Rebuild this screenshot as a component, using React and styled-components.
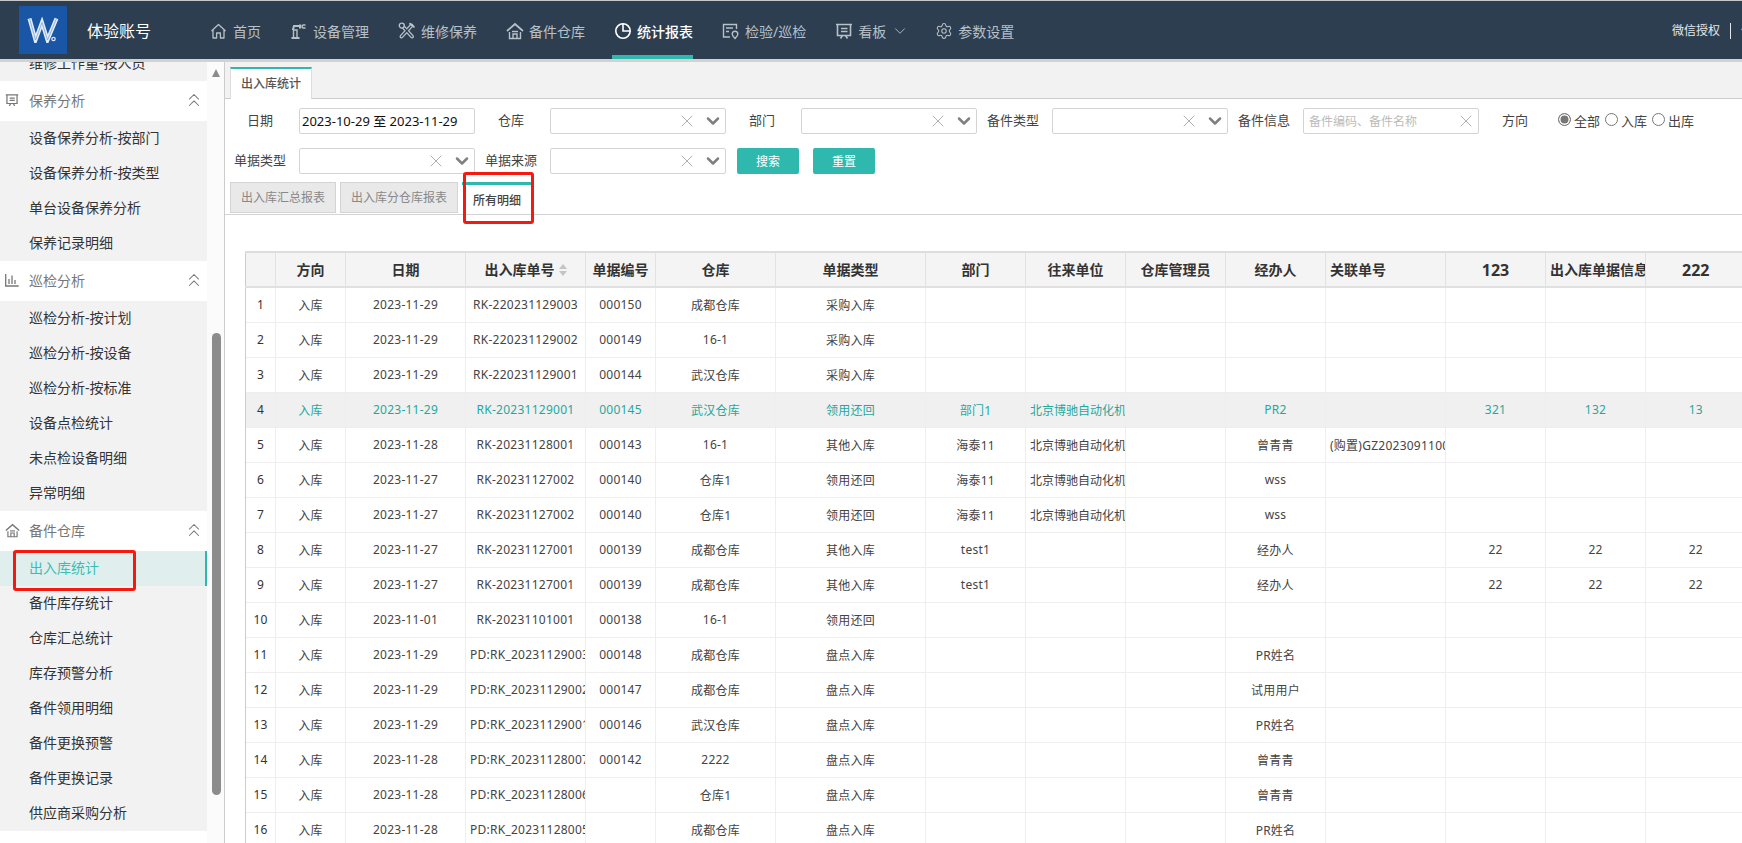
import React from 'react';
import styled, { createGlobalStyle } from 'styled-components';
import { ChevronDown, ChevronsUp, X, Settings } from 'lucide-react';

const GlobalStyle = createGlobalStyle`
  html, body {
    margin: 0;
    padding: 0;
    height: 100%;
    overflow: hidden;
    background: #fff;
  }
  body {
    font-family: "Noto Sans", "Noto Sans CJK SC", sans-serif;
    font-size: 12px;
    color: #333;
  }
  * { box-sizing: border-box; }
`;

const Page = styled.div`
  width: 1742px;
  height: 843px;
  display: flex;
  flex-direction: column;
  overflow: hidden;
`;

/* top bar */
const Header = styled.header`
  flex: none;
  height: 62px;
  padding: 5px 0 0 19px;
  display: flex;
  background: #2d3e50;
  border-top: 1px solid #c8c8c8;
  border-bottom: 3px solid #d2d2d2;
  overflow: hidden;
`;

const Logo = styled.div`
  flex: none;
  width: 48px;
  height: 48px;
  background: #1a56a6;
  display: flex;
  align-items: center;
  justify-content: center;
`;

const Brand = styled.div`
  flex: none;
  width: 143px;
  padding: 13px 0 0 20px;
  font-size: 16px;
  line-height: 24px;
  color: #fff;
`;

const Nav = styled.nav`
  flex: 1;
  display: flex;
  gap: 29px;
  margin-top: -5px;
`;

const NavItem = styled.a`
  height: 58px;
  display: flex;
  align-items: center;
  gap: 5px;
  font-size: 14px;
  padding-top: 6px;
  white-space: nowrap;
  color: ${(p) => (p.$active ? '#fff' : '#b8c0c8')};
  font-weight: ${(p) => (p.$active ? 500 : 400)};
  border-bottom: 4px solid ${(p) => (p.$active ? '#2fb9ae' : 'transparent')};
  margin-left: ${(p) => (p.$active ? '-2px' : '0')};
  padding-left: ${(p) => (p.$active ? '2px' : '0')};
`;

const NavMore = styled(ChevronDown)`
  margin-right: -3px;
`;

const HeaderRight = styled.div`
  flex: none;
  width: 70px;
  display: flex;
  margin-top: 17px;
  height: 16px;
  font-size: 12px;
  line-height: 16px;
  color: #e4e7ea;
  white-space: nowrap;
  overflow: hidden;
`;

const HeaderLink = styled.span`
  flex: none;
  width: 59px;
  margin-right: 10px;
  border-right: 1px solid #e4e7ea;
`;

const Body = styled.div`
  flex: 1;
  min-height: 0;
  display: flex;
`;

/* left menu */
const Side = styled.aside`
  flex: none;
  width: 225px;
  display: flex;
  background: #fbfbfb;
  border-right: 1px solid #ccc;
`;

const SideList = styled.div`
  flex: none;
  width: 207px;
  height: 100%;
  background: #fff;
  overflow: hidden;
`;

const ClippedItem = styled.div`
  height: 19px;
  padding-left: 29px;
  background: #f2f2f2;
  font-size: 14px;
  line-height: 2px;
  color: #333;
  overflow: hidden;
  white-space: nowrap;
`;

const GroupHead = styled.div`
  height: 40px;
  padding: 0 2px 2px 5px;
  display: flex;
  align-items: center;
  background: #fff;
  font-size: 14px;
  color: #777;
`;

const GroupIcon = styled.span`
  flex: none;
  width: 24px;
  display: flex;
`;

const GroupTitle = styled.span`
  flex: 1;
`;

const SubItem = styled.div`
  position: relative;
  height: 35px;
  padding-left: 29px;
  font-size: 14px;
  line-height: 34px;
  white-space: nowrap;
  color: ${(p) => (p.$active ? '#3dbdb2' : '#333')};
  background: ${(p) => (p.$active ? '#e0efee' : '#f2f2f2')};
  border-right: ${(p) => (p.$active ? '2px solid #2fb9ae' : 'none')};
`;

const ScrollGutter = styled.div`
  position: relative;
  flex: 1;
`;

const ScrollArrow = styled.div`
  position: absolute;
  left: 5px;
  top: 7px;
  width: 0;
  height: 0;
  border-left: 4.5px solid transparent;
  border-right: 4.5px solid transparent;
  border-bottom: 8px solid #8c8c8c;
`;

const ScrollThumb = styled.div`
  position: absolute;
  left: 5px;
  top: 271px;
  width: 9px;
  height: 462px;
  border-radius: 5px;
  background: #8c8c8c;
`;

const Mark = styled.div`
  position: absolute;
  z-index: 2;
  border: 3px solid #f5190f;
  border-radius: 3px;
  pointer-events: none;
`;

const MenuMark = styled(Mark)`
  left: 13px;
  top: -1px;
  width: 123px;
  height: 41px;
`;

/* right side */
const Main = styled.main`
  flex: 1;
  min-width: 0;
  display: flex;
  flex-direction: column;
  overflow: hidden;
`;

const PageTabs = styled.div`
  flex: none;
  height: 37px;
  padding: 5px 0 0 5px;
  background: #f2f2f2;
  border-bottom: 1px solid #ccc;
`;

const PageTab = styled.div`
  width: 82px;
  height: 32px;
  background: #fff;
  border-top: 2px solid #2fb9ae;
  border-left: 1px solid #ddd;
  border-right: 1px solid #ddd;
  text-align: center;
  font-size: 12px;
  line-height: 29px;
  font-weight: 500;
  color: #555;
`;

const FilterGrid = styled.div`
  flex: none;
  display: grid;
  grid-template-columns: repeat(5, 75px 176px) 75px auto;
  grid-auto-rows: 26px;
  row-gap: 14px;
  padding: 9px 0 0 0;
  margin-left: -1px;
`;

const FieldLabel = styled.label`
  font-size: 13px;
  line-height: 24px;
  padding-right: 3px;
  text-align: center;
  color: #444;
`;

const DateBox = styled.div`
  border: 1px solid #d4d4d4;
  border-radius: 2px;
  padding-left: 2px;
  font-size: 13px;
  line-height: 24px;
  color: #111;
  white-space: nowrap;
`;

const SelectBox = styled.div`
  border: 1px solid #d4d4d4;
  border-radius: 2px;
  display: flex;
  align-items: center;
  justify-content: flex-end;
  padding-right: 2px;
  gap: 6px;
  color: #a8a8a8;
`;

const TextBox = styled(SelectBox)`
  justify-content: space-between;
  padding: 0 2px 0 5px;
  font-size: 12px;
  color: #bbb;
`;

const RadioGroup = styled.div`
  display: flex;
  align-items: center;
  padding: 0 0 2px 4px;
  font-size: 13px;
  color: #444;
  grid-column: 12;
`;

const RadioDot = styled.span`
  width: 13px;
  height: 13px;
  margin: -1px 3px 0 ${(p) => (p.$first ? 0 : 5)}px;
  border: 1px solid #777;
  border-radius: 50%;
  background: ${(p) => (p.$on ? '#777' : '#fff')};
  box-shadow: ${(p) => (p.$on ? 'inset 0 0 0 1.5px #fff' : 'none')};
`;

const ButtonRow = styled.div`
  grid-column: 5 / span 3;
  display: flex;
  gap: 14px;
  padding-left: 11px;
`;

const TealButton = styled.button`
  width: 62px;
  height: 26px;
  padding: 0;
  border: none;
  border-radius: 2px;
  background: #2fb9ae;
  color: #fff;
  font: inherit;
  font-size: 12px;
`;

const ReportTabs = styled.div`
  position: relative;
  flex: none;
  height: 33px;
  margin-top: 8px;
  padding-left: 5px;
  display: flex;
  gap: 4px;
  border-bottom: 1px solid #d4d4d4;
`;

const ReportTab = styled.div`
  height: ${(p) => (p.$active ? '32px' : '31px')};
  padding: 0 10px;
  font-size: 12px;
  white-space: nowrap;
  ${(p) =>
    p.$active
      ? `
    margin-bottom: -1px;
    width: 70px;
    padding: 0 11px;
    line-height: 31px;
    font-weight: 500;
    color: #444;
    background: #fff;
    border-top: 3px solid #2fb9ae;
  `
      : `
    line-height: 29px;
    color: #888;
    background: #e9e9e9;
    border: 1px solid #d4d4d4;
  `}
`;

const TabMark = styled(Mark)`
  left: 238px;
  top: -10px;
  width: 71px;
  height: 52px;
`;

const TableWrap = styled.div`
  flex: 1;
  min-height: 0;
  margin: 36px 0 0 20px;
  overflow: hidden;
`;

const Table = styled.table`
  width: 1500px;
  table-layout: fixed;
  border-collapse: collapse;
  font-size: 12px;
  letter-spacing: 0.25px;
`;

const HeadRow = styled.tr`
  height: 35px;
  background: #f4f4f4;
  border-top: 2px solid #ddd;
  border-bottom: 2px solid #e0e0e0;
`;

const Th = styled.th`
  padding: 0 4px;
  font-size: ${(p) => (p.$digits ? '16px' : '14px')};
  font-weight: 700;
  letter-spacing: 0;
  line-height: 1;
  white-space: nowrap;
  overflow: hidden;
  text-align: ${(p) => (p.$left ? 'left' : 'center')};
  color: #333;
  border-left: 1px solid ${(p) => (p.$first ? '#ccc' : '#e2e2e2')};
`;

const SortIcon = styled.svg`
  width: 8px;
  height: 12px;
  margin-left: 4px;
  vertical-align: -1px;
`;

const Row = styled.tr`
  height: 35px;
  background: ${(p) => (p.$active ? '#f0f0f0' : '#fff')};
  color: ${(p) => (p.$active ? '#1fa99e' : '#444')};
  border-bottom: 1px solid #eee;
`;

const Td = styled.td`
  padding: 0 0 0 ${(p) => (p.$left ? '4px' : '0')};
  text-align: ${(p) => (p.$left ? 'left' : 'center')};
  white-space: nowrap;
  overflow: hidden;
  border-left: 1px solid ${(p) => (p.$first ? '#ccc' : '#eee')};
`;

const IndexCell = styled(Td)`
  color: #333;
`;

const CompanyCell = styled(Td)`
  letter-spacing: 0;
`;

/* icons */
const HomeIcon = () => (
  <svg width="18" height="18" viewBox="0 0 18 18" fill="none" stroke="currentColor" strokeWidth="1.3" strokeLinejoin="round">
    <path d="M1.5 9 8.500 2.500 15.500 9M3 8v8h3.600v-5h3.800v5H14V8" />
  </svg>
);

const RobotIcon = () => (
  <svg width="18" height="18" viewBox="0 0 18 18" fill="none" stroke="currentColor">
    <path d="M1.500 16h8" strokeWidth="2" />
    <path d="M3.500 15V8h3.500v7" strokeWidth="1.400" />
    <path d="M2.800 8 4 4h6" strokeWidth="2" />
    <path d="M10 2.500v4" strokeWidth="2" />
    <path d="M15.500 3h-2a1.300 1.300 0 0 0 0 3h2" strokeWidth="1.600" />
  </svg>
);

const ToolsIcon = () => (
  <svg width="18" height="18" viewBox="0 0 18 18" fill="none" strokeLinecap="round">
    <path d="M4 3.500 14 14.500M13.500 3.500 3.500 14.500" stroke="currentColor" strokeWidth="4" />
    <path d="M4 3.500 14 14.500M13.500 3.500 3.500 14.500" stroke="#2d3e50" strokeWidth="1.300" />
    <circle cx="3.800" cy="3.600" r="2.500" fill="#2d3e50" stroke="currentColor" strokeWidth="1.400" />
    <path d="M12 1.800l3.800 3" stroke="currentColor" strokeWidth="2" />
  </svg>
);

const StoreIcon = ({ size = 18 }) => (
  <svg width={size} height={size} viewBox="0 0 18 18" fill="none" stroke="currentColor">
    <path d="M1 9 9 2l8 7" strokeWidth="1.800" />
    <path d="M6 9.500h6" strokeWidth="1.400" />
    <path d="M3.500 10v6.500h11V10M7 16.500v-4.500h4v4.500" strokeWidth="1.400" />
  </svg>
);

const PieIcon = () => (
  <svg width="18" height="18" viewBox="0 0 18 18" fill="none" stroke="currentColor" strokeWidth="1.600">
    <circle cx="9" cy="9" r="7.200" />
    <path d="M9 1.800V9h7.200" />
  </svg>
);

const CheckIcon = () => (
  <svg width="18" height="18" viewBox="0 0 18 18" fill="none" stroke="currentColor" strokeWidth="1.400">
    <path d="M8 15H1.500V2.500h13V7M4 6h7M4 9.500h3" />
    <path d="M13 16.500s-2.800-2.500-2.800-4.500a2.800 2.800 0 0 1 5.600 0c0 2-2.800 4.500-2.800 4.500z" />
  </svg>
);

const BoardIcon = ({ size = 18 }) => (
  <svg width={size} height={size} viewBox="0 0 18 18" fill="none" stroke="currentColor" strokeWidth="1.600">
    <path d="M1 2.500h16M2.500 2.500v11h13v-11M5.500 16.500l2-3M12.500 16.500l-2-3M6 6.500h6.500M6 9.500h6.500" />
  </svg>
);

const BarsIcon = () => (
  <svg width="14" height="14" viewBox="0 0 14 14" fill="none" stroke="currentColor" strokeWidth="1.300">
    <path d="M.7 1v12h13M4 11V6M7 11V2.500M10 11V7" />
  </svg>
);

const LogoMark = () => (
  <svg width="32" height="26" viewBox="0 0 32 26" fill="none" strokeLinejoin="miter">
    <path d="M2.500 1.500 8.500 23 15 5.500 20.500 23 29.500 1.500" stroke="#e3ecf8" strokeWidth="4" />
    <path d="M2.500 1.500 8.500 23 15 5.500 20.500 23 29.500 1.500" stroke="#7ea3d6" strokeWidth="0.800" />
    <circle cx="26.500" cy="22" r="1.700" fill="#1a56a6" stroke="#e3ecf8" strokeWidth="1.200" />
  </svg>
);

const navItems = [
  { label: '首页', icon: <HomeIcon /> },
  { label: '设备管理', icon: <RobotIcon /> },
  { label: '维修保养', icon: <ToolsIcon /> },
  { label: '备件仓库', icon: <StoreIcon /> },
  { label: '统计报表', icon: <PieIcon />, active: true },
  { label: '检验/巡检', icon: <CheckIcon /> },
  { label: '看板', icon: <BoardIcon />, more: true },
  { label: '参数设置', icon: <Settings size={18} strokeWidth={1.4} /> },
];

const menu = [
  {
    title: '保养分析',
    icon: <BoardIcon size={14} />,
    items: ['设备保养分析-按部门', '设备保养分析-按类型', '单台设备保养分析', '保养记录明细'],
  },
  {
    title: '巡检分析',
    icon: <BarsIcon />,
    items: ['巡检分析-按计划', '巡检分析-按设备', '巡检分析-按标准', '设备点检统计', '未点检设备明细', '异常明细'],
  },
  {
    title: '备件仓库',
    icon: <StoreIcon size={15} />,
    items: ['出入库统计', '备件库存统计', '仓库汇总统计', '库存预警分析', '备件领用明细', '备件更换预警', '备件更换记录', '供应商采购分析'],
  },
];

const columns = [
  { label: '', width: 30 },
  { label: '方向', width: 70 },
  { label: '日期', width: 120 },
  { label: '出入库单号', width: 120, sort: true },
  { label: '单据编号', width: 70 },
  { label: '仓库', width: 120 },
  { label: '单据类型', width: 150 },
  { label: '部门', width: 100 },
  { label: '往来单位', width: 100 },
  { label: '仓库管理员', width: 100 },
  { label: '经办人', width: 100 },
  { label: '关联单号', width: 120, left: true },
  { label: '123', width: 100, digits: true },
  { label: '出入库单据信息', width: 100, left: true },
  { label: '222', width: 100, digits: true },
];

const COMPANY = '北京博驰自动化机械有限公司';
const LINKED = '(购置)GZ202309110001';

// date, no, code, store, type, dept, company, handler, linked, a, b, c
const rows = [
  ['2023-11-29', 'RK-220231129003', '000150', '成都仓库', '采购入库'],
  ['2023-11-29', 'RK-220231129002', '000149', '16-1', '采购入库'],
  ['2023-11-29', 'RK-220231129001', '000144', '武汉仓库', '采购入库'],
  ['2023-11-29', 'RK-20231129001', '000145', '武汉仓库', '领用还回', '部门1', COMPANY, 'PR2', '', '321', '132', '13'],
  ['2023-11-28', 'RK-20231128001', '000143', '16-1', '其他入库', '海泰11', COMPANY, '曾青青', LINKED],
  ['2023-11-27', 'RK-20231127002', '000140', '仓库1', '领用还回', '海泰11', COMPANY, 'wss'],
  ['2023-11-27', 'RK-20231127002', '000140', '仓库1', '领用还回', '海泰11', COMPANY, 'wss'],
  ['2023-11-27', 'RK-20231127001', '000139', '成都仓库', '其他入库', 'test1', '', '经办人', '', '22', '22', '22'],
  ['2023-11-27', 'RK-20231127001', '000139', '成都仓库', '其他入库', 'test1', '', '经办人', '', '22', '22', '22'],
  ['2023-11-01', 'RK-20231101001', '000138', '16-1', '领用还回'],
  ['2023-11-29', 'PD:RK_20231129003', '000148', '成都仓库', '盘点入库', '', '', 'PR姓名'],
  ['2023-11-29', 'PD:RK_20231129002', '000147', '成都仓库', '盘点入库', '', '', '试用用户'],
  ['2023-11-29', 'PD:RK_20231129001', '000146', '武汉仓库', '盘点入库', '', '', 'PR姓名'],
  ['2023-11-28', 'PD:RK_20231128007', '000142', '2222', '盘点入库', '', '', '曾青青'],
  ['2023-11-28', 'PD:RK_20231128006', '', '仓库1', '盘点入库', '', '', '曾青青'],
  ['2023-11-28', 'PD:RK_20231128005', '', '成都仓库', '盘点入库', '', '', 'PR姓名'],
];

const SelectField = () => (
  <SelectBox>
    <X size={20} strokeWidth={1.1} />
    <ChevronDown size={20} strokeWidth={3} color="#808080" />
  </SelectBox>
);

export default function App() {
  return (
    <Page>
      <GlobalStyle />
      <Header>
        <Logo>
          <LogoMark />
        </Logo>
        <Brand>体验账号</Brand>
        <Nav>
          {navItems.map((item) => (
            <NavItem key={item.label} $active={item.active}>
              {item.icon}
              {item.label}
              {item.more && <NavMore size={18} strokeWidth={1.2} />}
            </NavItem>
          ))}
        </Nav>
        <HeaderRight>
          <HeaderLink>微信授权</HeaderLink>
          体验账号
        </HeaderRight>
      </Header>

      <Body>
        <Side>
          <SideList>
            <ClippedItem>维修工作量-按人员</ClippedItem>
            {menu.map((group) => (
              <div key={group.title}>
                <GroupHead>
                  <GroupIcon>{group.icon}</GroupIcon>
                  <GroupTitle>{group.title}</GroupTitle>
                  <ChevronsUp size={22} strokeWidth={1.1} />
                </GroupHead>
                {group.items.map((name) => (
                  <SubItem key={name} $active={name === '出入库统计'}>
                    {name}
                    {name === '出入库统计' && <MenuMark />}
                  </SubItem>
                ))}
              </div>
            ))}
          </SideList>
          <ScrollGutter>
            <ScrollArrow />
            <ScrollThumb />
          </ScrollGutter>
        </Side>

        <Main>
          <PageTabs>
            <PageTab>出入库统计</PageTab>
          </PageTabs>

          <FilterGrid>
            <FieldLabel>日期</FieldLabel>
            <DateBox>2023-10-29 至 2023-11-29</DateBox>
            <FieldLabel>仓库</FieldLabel>
            <SelectField />
            <FieldLabel>部门</FieldLabel>
            <SelectField />
            <FieldLabel>备件类型</FieldLabel>
            <SelectField />
            <FieldLabel>备件信息</FieldLabel>
            <TextBox>
              备件编码、备件名称
              <X size={20} strokeWidth={1.1} color="#a8a8a8" />
            </TextBox>
            <FieldLabel>方向</FieldLabel>
            <RadioGroup>
              <RadioDot $first $on />全部
              <RadioDot />入库
              <RadioDot />出库
            </RadioGroup>

            <FieldLabel>单据类型</FieldLabel>
            <SelectField />
            <FieldLabel>单据来源</FieldLabel>
            <SelectField />
            <ButtonRow>
              <TealButton>搜索</TealButton>
              <TealButton>重置</TealButton>
            </ButtonRow>
          </FilterGrid>

          <ReportTabs>
            <ReportTab>出入库汇总报表</ReportTab>
            <ReportTab>出入库分仓库报表</ReportTab>
            <ReportTab $active>所有明细</ReportTab>
            <TabMark />
          </ReportTabs>

          <TableWrap>
            <Table>
              <colgroup>
                {columns.map((col, i) => (
                  <col key={i} width={col.width} />
                ))}
              </colgroup>
              <thead>
                <HeadRow>
                  {columns.map((col, i) => (
                    <Th key={i} $first={i === 0} $left={col.left} $digits={col.digits}>
                      {col.label}
                      {col.sort && (
                        <SortIcon viewBox="0 0 8 12">
                          <path d="M4 0l4 5H0zM4 12L0 7h8z" fill="#c4c4c4" />
                        </SortIcon>
                      )}
                    </Th>
                  ))}
                </HeadRow>
              </thead>
              <tbody>
                {rows.map((r, i) => (
                  <Row key={i} $active={i === 3}>
                    <IndexCell $first>{i + 1}</IndexCell>
                    <Td>入库</Td>
                    <Td>{r[0]}</Td>
                    <Td $left={r[1].startsWith('PD')}>{r[1]}</Td>
                    <Td>{r[2]}</Td>
                    <Td>{r[3]}</Td>
                    <Td>{r[4]}</Td>
                    <Td>{r[5]}</Td>
                    <CompanyCell $left>{r[6]}</CompanyCell>
                    <Td />
                    <Td>{r[7]}</Td>
                    <Td $left>{r[8]}</Td>
                    <Td>{r[9]}</Td>
                    <Td>{r[10]}</Td>
                    <Td>{r[11]}</Td>
                  </Row>
                ))}
              </tbody>
            </Table>
          </TableWrap>
        </Main>
      </Body>
    </Page>
  );
}
